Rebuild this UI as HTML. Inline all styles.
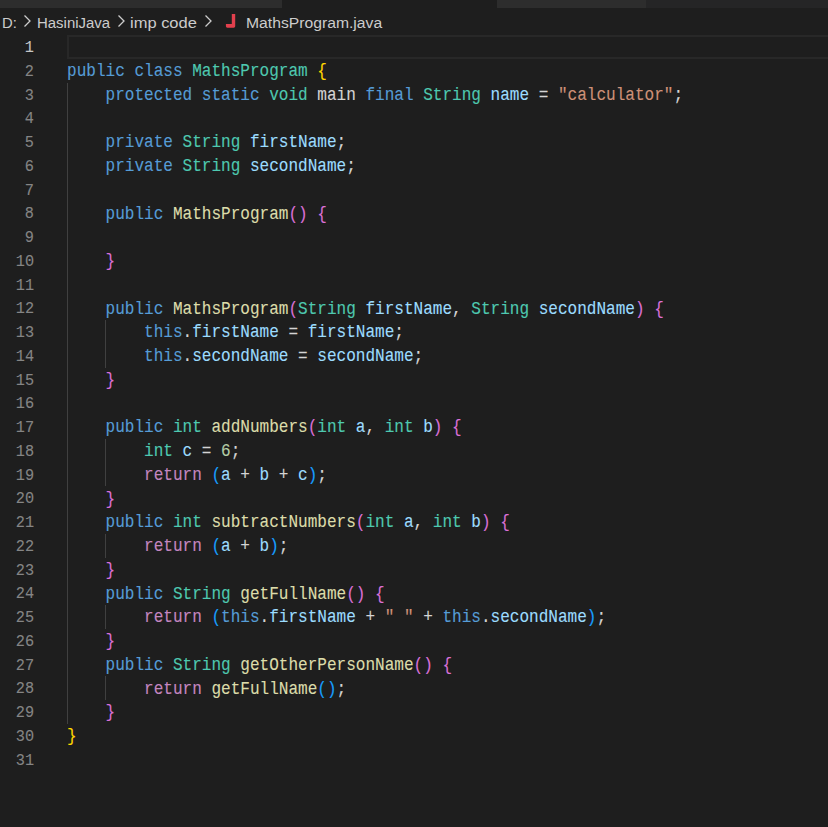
<!DOCTYPE html>
<html><head><meta charset="utf-8"><style>
html,body{margin:0;padding:0;width:828px;height:827px;overflow:hidden;background:#1e1e1e;}
.a{position:absolute;}
.code{font-family:"Liberation Mono",monospace;font-size:17.5px;white-space:pre;line-height:23.75px;height:23.75px;transform-origin:0 0;transform:scaleX(0.91652);-webkit-text-stroke:0.12px currentColor;}
.ln{font-family:"Liberation Mono",monospace;font-size:16px;white-space:pre;line-height:23.75px;color:#858585;text-align:right;width:60px;left:-25.7px;transform-origin:100% 0;transform:scaleX(0.95000);-webkit-text-stroke:0.1px currentColor;}
.bc{font-family:"Liberation Sans",sans-serif;font-size:15.5px;transform-origin:0 0;color:#cccccc;white-space:pre;line-height:27px;top:8.5px;}
.g{position:absolute;width:1px;background:#404040;}
</style></head><body>

<div class="a" style="left:0;top:0;width:282px;height:8px;background:#2d2d2d"></div>
<div class="a" style="left:497px;top:0;width:149px;height:8px;background:#2d2d2d"></div>
<div class="a" style="left:646px;top:0;width:182px;height:8px;background:#252526"></div>
<div class="a" style="left:67px;top:35px;width:761px;height:23.75px;box-sizing:border-box;border:2px solid #282828;border-right:none"></div>
<div class="g" style="left:67.00px;top:82.50px;height:641.25px"></div>
<div class="g" style="left:105.00px;top:320.00px;height:47.50px"></div>
<div class="g" style="left:105.00px;top:438.75px;height:47.50px"></div>
<div class="g" style="left:105.00px;top:533.75px;height:23.75px"></div>
<div class="g" style="left:105.00px;top:605.00px;height:23.75px"></div>
<div class="g" style="left:105.00px;top:676.25px;height:23.75px"></div>
<div class="a ln" style="top:37.00px;color:#c6c6c6">1</div>
<div class="a ln" style="top:60.75px;color:#858585">2</div>
<div class="a ln" style="top:84.50px;color:#858585">3</div>
<div class="a ln" style="top:108.25px;color:#858585">4</div>
<div class="a ln" style="top:132.00px;color:#858585">5</div>
<div class="a ln" style="top:155.75px;color:#858585">6</div>
<div class="a ln" style="top:179.50px;color:#858585">7</div>
<div class="a ln" style="top:203.25px;color:#858585">8</div>
<div class="a ln" style="top:227.00px;color:#858585">9</div>
<div class="a ln" style="top:250.75px;color:#858585">10</div>
<div class="a ln" style="top:274.50px;color:#858585">11</div>
<div class="a ln" style="top:298.25px;color:#858585">12</div>
<div class="a ln" style="top:322.00px;color:#858585">13</div>
<div class="a ln" style="top:345.75px;color:#858585">14</div>
<div class="a ln" style="top:369.50px;color:#858585">15</div>
<div class="a ln" style="top:393.25px;color:#858585">16</div>
<div class="a ln" style="top:417.00px;color:#858585">17</div>
<div class="a ln" style="top:440.75px;color:#858585">18</div>
<div class="a ln" style="top:464.50px;color:#858585">19</div>
<div class="a ln" style="top:488.25px;color:#858585">20</div>
<div class="a ln" style="top:512.00px;color:#858585">21</div>
<div class="a ln" style="top:535.75px;color:#858585">22</div>
<div class="a ln" style="top:559.50px;color:#858585">23</div>
<div class="a ln" style="top:583.25px;color:#858585">24</div>
<div class="a ln" style="top:607.00px;color:#858585">25</div>
<div class="a ln" style="top:630.75px;color:#858585">26</div>
<div class="a ln" style="top:654.50px;color:#858585">27</div>
<div class="a ln" style="top:678.25px;color:#858585">28</div>
<div class="a ln" style="top:702.00px;color:#858585">29</div>
<div class="a ln" style="top:725.75px;color:#858585">30</div>
<div class="a ln" style="top:749.50px;color:#858585">31</div>
<div class="a code" style="left:67px;top:60.05px"><span style="color:#569cd6">public class </span><span style="color:#4ec9b0">MathsProgram </span><span style="color:#ffd700">{</span></div>
<div class="a code" style="left:67px;top:83.80px"><span style="color:#569cd6">    protected static </span><span style="color:#4ec9b0">void </span><span style="color:#d4d4d4">main </span><span style="color:#569cd6">final </span><span style="color:#4ec9b0">String </span><span style="color:#9cdcfe">name</span><span style="color:#d4d4d4"> = </span><span style="color:#ce9178">&quot;calculator&quot;</span><span style="color:#d4d4d4">;</span></div>
<div class="a code" style="left:67px;top:131.30px"><span style="color:#569cd6">    private </span><span style="color:#4ec9b0">String </span><span style="color:#9cdcfe">firstName</span><span style="color:#d4d4d4">;</span></div>
<div class="a code" style="left:67px;top:155.05px"><span style="color:#569cd6">    private </span><span style="color:#4ec9b0">String </span><span style="color:#9cdcfe">secondName</span><span style="color:#d4d4d4">;</span></div>
<div class="a code" style="left:67px;top:202.55px"><span style="color:#569cd6">    public </span><span style="color:#dcdcaa">MathsProgram</span><span style="color:#da70d6">() {</span></div>
<div class="a code" style="left:67px;top:250.05px"><span style="color:#da70d6">    }</span></div>
<div class="a code" style="left:67px;top:297.55px"><span style="color:#569cd6">    public </span><span style="color:#dcdcaa">MathsProgram</span><span style="color:#da70d6">(</span><span style="color:#4ec9b0">String </span><span style="color:#9cdcfe">firstName</span><span style="color:#d4d4d4">, </span><span style="color:#4ec9b0">String </span><span style="color:#9cdcfe">secondName</span><span style="color:#da70d6">) {</span></div>
<div class="a code" style="left:67px;top:321.30px"><span style="color:#569cd6">        this</span><span style="color:#d4d4d4">.</span><span style="color:#9cdcfe">firstName</span><span style="color:#d4d4d4"> = </span><span style="color:#9cdcfe">firstName</span><span style="color:#d4d4d4">;</span></div>
<div class="a code" style="left:67px;top:345.05px"><span style="color:#569cd6">        this</span><span style="color:#d4d4d4">.</span><span style="color:#9cdcfe">secondName</span><span style="color:#d4d4d4"> = </span><span style="color:#9cdcfe">secondName</span><span style="color:#d4d4d4">;</span></div>
<div class="a code" style="left:67px;top:368.80px"><span style="color:#da70d6">    }</span></div>
<div class="a code" style="left:67px;top:416.30px"><span style="color:#569cd6">    public </span><span style="color:#4ec9b0">int </span><span style="color:#dcdcaa">addNumbers</span><span style="color:#da70d6">(</span><span style="color:#4ec9b0">int </span><span style="color:#9cdcfe">a</span><span style="color:#d4d4d4">, </span><span style="color:#4ec9b0">int </span><span style="color:#9cdcfe">b</span><span style="color:#da70d6">) {</span></div>
<div class="a code" style="left:67px;top:440.05px"><span style="color:#4ec9b0">        int </span><span style="color:#9cdcfe">c</span><span style="color:#d4d4d4"> = </span><span style="color:#b5cea8">6</span><span style="color:#d4d4d4">;</span></div>
<div class="a code" style="left:67px;top:463.80px"><span style="color:#c586c0">        return </span><span style="color:#179fff">(</span><span style="color:#9cdcfe">a</span><span style="color:#d4d4d4"> + </span><span style="color:#9cdcfe">b</span><span style="color:#d4d4d4"> + </span><span style="color:#9cdcfe">c</span><span style="color:#179fff">)</span><span style="color:#d4d4d4">;</span></div>
<div class="a code" style="left:67px;top:487.55px"><span style="color:#da70d6">    }</span></div>
<div class="a code" style="left:67px;top:511.30px"><span style="color:#569cd6">    public </span><span style="color:#4ec9b0">int </span><span style="color:#dcdcaa">subtractNumbers</span><span style="color:#da70d6">(</span><span style="color:#4ec9b0">int </span><span style="color:#9cdcfe">a</span><span style="color:#d4d4d4">, </span><span style="color:#4ec9b0">int </span><span style="color:#9cdcfe">b</span><span style="color:#da70d6">) {</span></div>
<div class="a code" style="left:67px;top:535.05px"><span style="color:#c586c0">        return </span><span style="color:#179fff">(</span><span style="color:#9cdcfe">a</span><span style="color:#d4d4d4"> + </span><span style="color:#9cdcfe">b</span><span style="color:#179fff">)</span><span style="color:#d4d4d4">;</span></div>
<div class="a code" style="left:67px;top:558.80px"><span style="color:#da70d6">    }</span></div>
<div class="a code" style="left:67px;top:582.55px"><span style="color:#569cd6">    public </span><span style="color:#4ec9b0">String </span><span style="color:#dcdcaa">getFullName</span><span style="color:#da70d6">() {</span></div>
<div class="a code" style="left:67px;top:606.30px"><span style="color:#c586c0">        return </span><span style="color:#179fff">(</span><span style="color:#569cd6">this</span><span style="color:#d4d4d4">.</span><span style="color:#9cdcfe">firstName</span><span style="color:#d4d4d4"> + </span><span style="color:#ce9178">&quot; &quot;</span><span style="color:#d4d4d4"> + </span><span style="color:#569cd6">this</span><span style="color:#d4d4d4">.</span><span style="color:#9cdcfe">secondName</span><span style="color:#179fff">)</span><span style="color:#d4d4d4">;</span></div>
<div class="a code" style="left:67px;top:630.05px"><span style="color:#da70d6">    }</span></div>
<div class="a code" style="left:67px;top:653.80px"><span style="color:#569cd6">    public </span><span style="color:#4ec9b0">String </span><span style="color:#dcdcaa">getOtherPersonName</span><span style="color:#da70d6">() {</span></div>
<div class="a code" style="left:67px;top:677.55px"><span style="color:#c586c0">        return </span><span style="color:#dcdcaa">getFullName</span><span style="color:#179fff">()</span><span style="color:#d4d4d4">;</span></div>
<div class="a code" style="left:67px;top:701.30px"><span style="color:#da70d6">    }</span></div>
<div class="a code" style="left:67px;top:725.05px"><span style="color:#ffd700">}</span></div>
<div class="a bc" style="left:1.90px;transform:scaleX(0.9570)">D:</div>
<svg class="a" style="left:23.1px;top:13px" width="9" height="16" viewBox="0 0 9 16"><path d="M1.5 2.5 L7 8 L1.5 13.5" fill="none" stroke="#cccccc" stroke-width="1.3"/></svg>
<div class="a bc" style="left:36.70px;transform:scaleX(0.9640)">HasiniJava</div>
<svg class="a" style="left:117px;top:13px" width="9" height="16" viewBox="0 0 9 16"><path d="M1.5 2.5 L7 8 L1.5 13.5" fill="none" stroke="#cccccc" stroke-width="1.3"/></svg>
<div class="a bc" style="left:130.30px;transform:scaleX(1.0630)">imp code</div>
<svg class="a" style="left:204px;top:13px" width="9" height="16" viewBox="0 0 9 16"><path d="M1.5 2.5 L7 8 L1.5 13.5" fill="none" stroke="#cccccc" stroke-width="1.3"/></svg>
<svg class="a" style="left:224px;top:12px" width="14" height="18" viewBox="224 12 14 18"><path d="M231.8 14 H235.2 V26.3 Q235.2 27.7 233.8 27.7 H227.3 Q225.9 27.7 225.9 26.3 V23.9 H231.8 Z" fill="#e2404d"/></svg>
<div class="a bc" style="left:245.80px;transform:scaleX(1.0130)">MathsProgram.java</div>
</body></html>
